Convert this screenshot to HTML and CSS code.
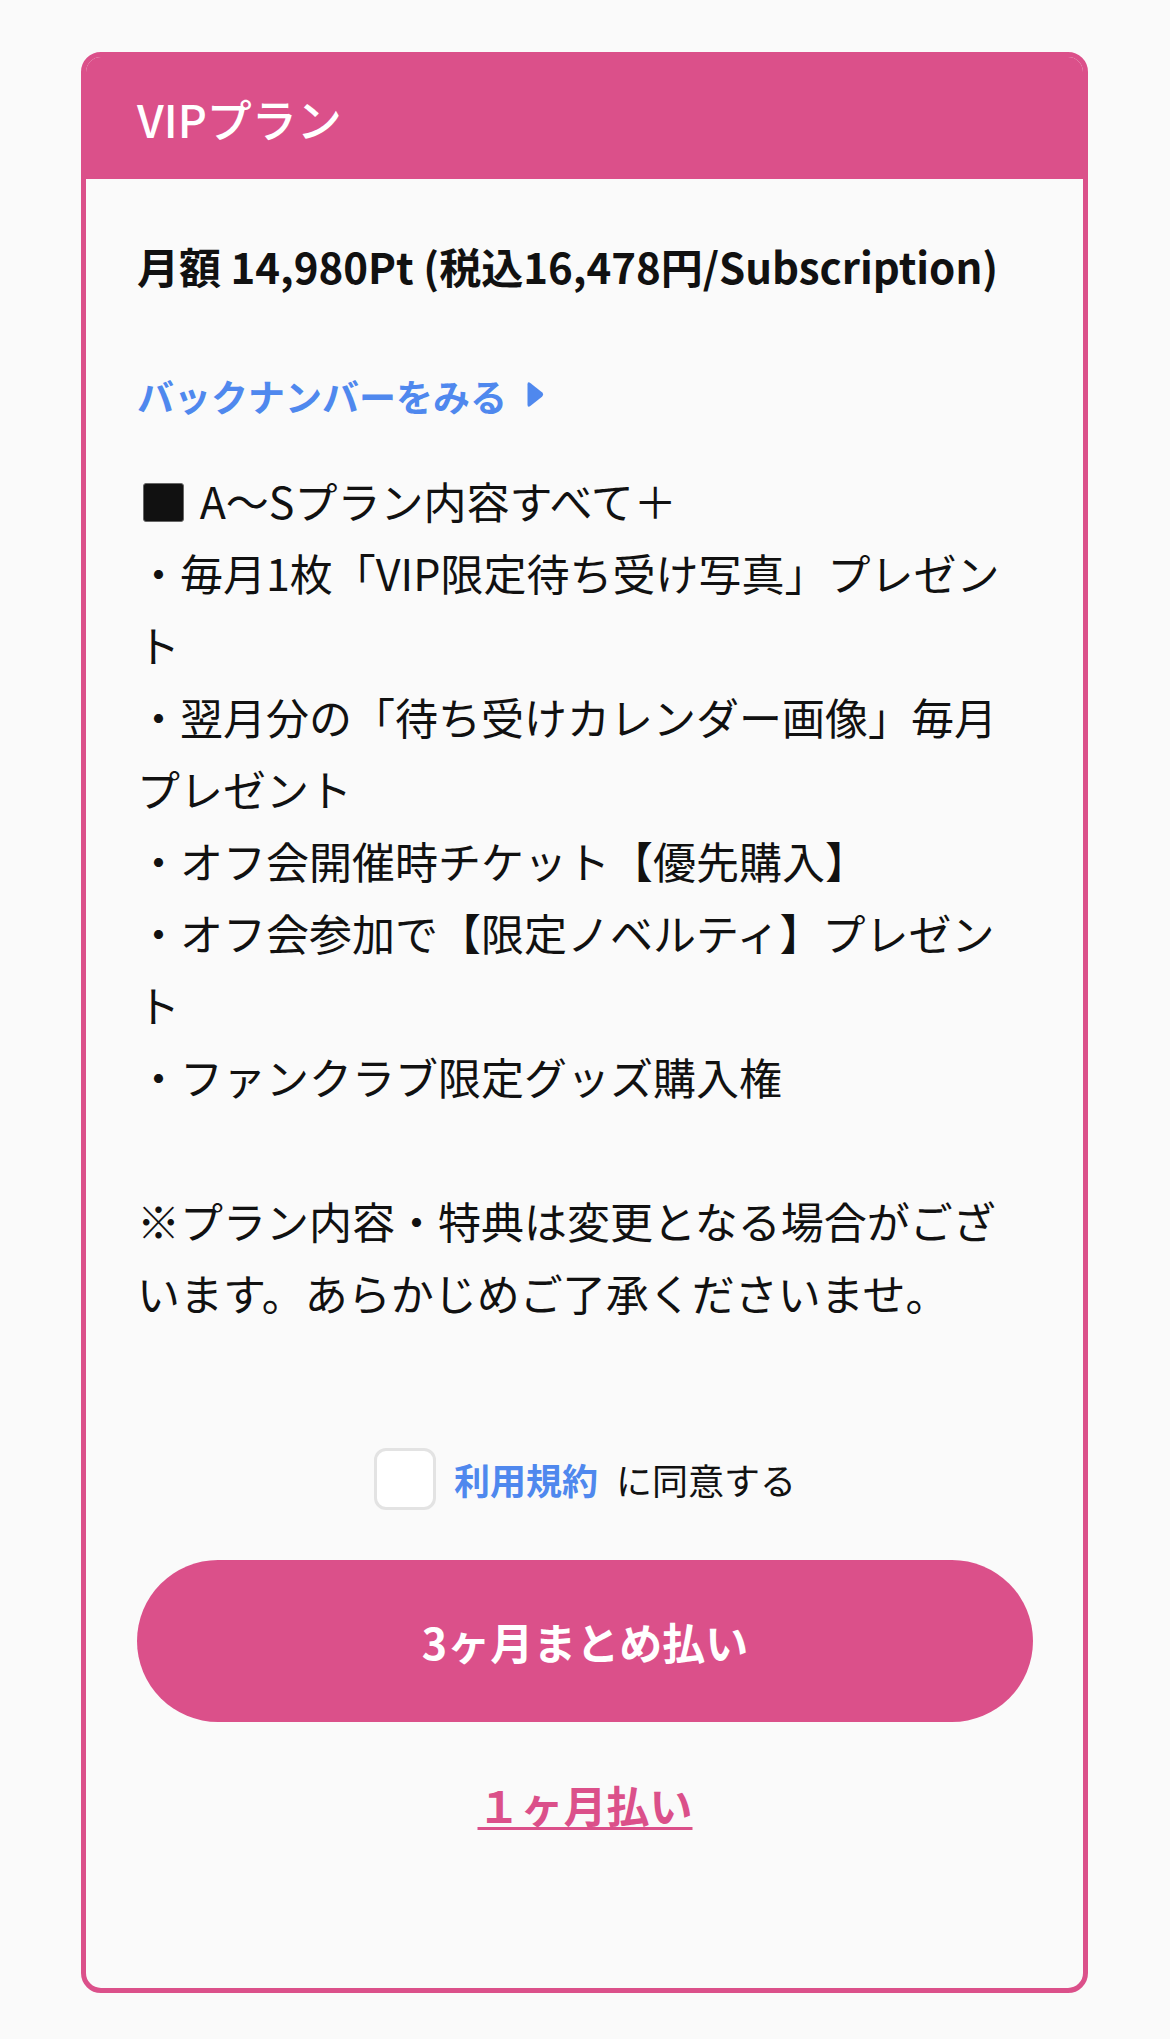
FILE: index.html
```html
<!DOCTYPE html>
<html lang="ja">
<head>
<meta charset="utf-8">
<title>VIPプラン</title>
<link rel="stylesheet" href="styles.css">
</head>
<body>
<div class="page">
  <section class="card">
    <header class="card-header">VIPプラン</header>
    <div class="card-body">
      <p class="price">月額 14,980Pt (税込16,478円/Subscription)</p>
      <a class="backnumber" href="#">バックナンバーをみる<svg class="tri" width="18" height="29" viewBox="0 0 18 29"><path d="M1.5 4.5 Q1.5 0.8 4.6 3.2 L16 12.3 Q18.2 14.5 16 16.7 L4.6 25.8 Q1.5 28.2 1.5 24.5 Z" fill="#4f88ee"/></svg></a>
      <div class="content"><span class="sq">■</span> A〜Sプラン内容すべて＋<br>・毎月1枚「VIP限定待ち受け写真」プレゼント<br>・翌月分の「待ち受けカレンダー画像」毎月プレゼント<br>・オフ会開催時チケット【優先購入】<br>・オフ会参加で【限定ノベルティ】プレゼント<br>・ファンクラブ限定グッズ購入権<br><br>※プラン内容・特典は変更となる場合がございます。あらかじめご了承くださいませ。</div>
      <label class="agree">
        <span class="checkbox"></span>
        <span class="agree-text"><a class="terms" href="#">利用規約</a>に同意する</span>
      </label>
      <button class="btn" type="button">3ヶ月まとめ払い</button>
      <div class="monthly"><a href="#">１ヶ月払い</a></div>
    </div>
  </section>
</div>
</body>
</html>
```
FILE: styles.css
```css
* { box-sizing: border-box; }
html, body { margin: 0; padding: 0; }
body {
  background: #fafafa;
  font-family: "Noto Sans CJK JP", "Noto Sans", sans-serif;
  color: #111;
}
.page {
  padding: 52px 82px 50px 81px;
}
.card {
  border: 5px solid #db508a;
  border-radius: 20px;
  overflow: hidden;
  background: #fafafa;
}
.card-header {
  background: #db508a;
  height: 122px;
  display: flex;
  align-items: center;
  padding-left: 51px;
  color: #fff;
  font-size: 45px;
  font-weight: 500;
}
.card-body {
  padding: 57px 50px 142px 51px;
}
.price {
  margin: 0;
  font-size: 42px;
  line-height: 60px;
  font-weight: 700;
  white-space: nowrap;
  color: #111;
}
.backnumber {
  margin-top: 70px;
  display: flex;
  align-items: center;
  gap: 19px;
  font-size: 37px;
  line-height: 60px;
  font-weight: 700;
  color: #4f88ee;
  text-decoration: none;
}
.tri { display: block; margin-top: -4px; }
.content {
  margin-top: 38px;
  font-size: 43px;
  line-height: 72px;
  color: #111;
}
.sq {
  display: inline-block;
  width: 41px;
  height: 39px;
  margin-left: 6px;
  margin-right: 6px;
  background: #111;
  color: #111;
  border: 1px solid #666;
  border-radius: 3px;
  font-size: 20px;
  line-height: 37px;
  overflow: hidden;
  vertical-align: -3px;
}
.agree {
  margin-top: 120px;
  display: flex;
  justify-content: center;
  align-items: center;
  gap: 18px;
  font-size: 36px;
  line-height: 62px;
}
.checkbox {
  width: 62px;
  height: 62px;
  border: 3px solid #e3e3e3;
  border-radius: 12px;
  background: #fff;
}
.terms {
  color: #4f88ee;
  font-weight: 700;
  text-decoration: none;
  margin-right: 18px;
}
.btn {
  margin-top: 50px;
  width: 100%;
  height: 162px;
  border: none;
  border-radius: 81px;
  background: #db508a;
  color: #fff;
  font-family: inherit;
  font-size: 43px;
  font-weight: 700;
  display: flex;
  align-items: center;
  justify-content: center;
}
.monthly {
  margin-top: 52px;
  text-align: center;
  line-height: 60px;
}
.monthly a {
  color: #db508a;
  font-size: 43px;
  font-weight: 700;
  text-decoration: underline;
  text-decoration-thickness: 3px;
  text-underline-offset: 4px;
}
```
